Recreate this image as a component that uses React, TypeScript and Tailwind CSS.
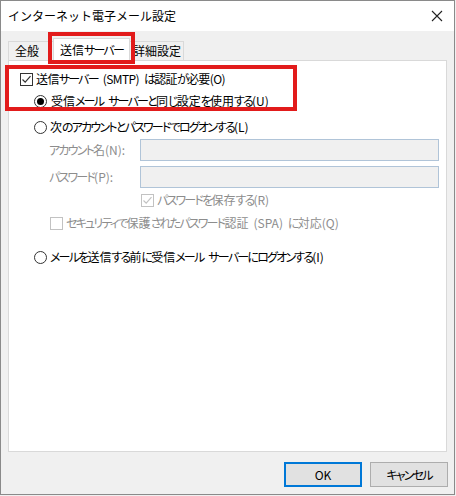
import React from 'react';

const font = { fontFamily: '"Noto Sans CJK JP", "Noto Sans", sans-serif' };

// Narrow the kana runs, the way the dialog's UI font draws them
function J({ t }: { t: string }) {
  const parts = t.split(/([\u3040-\u30ff]+| )/);
  return (
    <span className="whitespace-nowrap">
      {parts.map((p, i) =>
        p === ' ' ? (
          <span key={i} className="inline-block w-[5px]" />
        ) : /^[\u3040-\u30ff]+$/.test(p) ? (
          <span key={i} className="tracking-[-1.8px]">{p}</span>
        ) : (
          <span key={i}>{p}</span>
        )
      )}
    </span>
  );
}

function CheckBox({ checked, disabled }: { checked?: boolean; disabled?: boolean }) {
  const c = disabled ? '#c2c2c2' : '#333333';
  return (
    <svg width="13" height="13" viewBox="0 0 13 13" className="flex-shrink-0">
      <rect x="0.5" y="0.5" width="12" height="12" fill="#ffffff" stroke={c} />
      {checked && <path d="M2.5 6.5 L5.2 9.2 L10.5 3.2" fill="none" stroke={c} strokeWidth="1.2" />}
    </svg>
  );
}

function Radio({ checked }: { checked?: boolean }) {
  return (
    <svg width="13" height="13" viewBox="0 0 13 13" className="flex-shrink-0">
      <circle cx="6.5" cy="6.5" r="6" fill="#ffffff" stroke="#333333" />
      {checked && <circle cx="6.5" cy="6.5" r="3.5" fill="#000000" />}
    </svg>
  );
}

/**
 * Outlook account settings dialog - outgoing server tab
 */
export default function App() {
  return (
    <div className="w-[456px] h-[496px] bg-[#f0f0f0] text-[12px] text-black relative" style={font}>
      <div className="w-[455px] h-[495px] border border-[#8a8a8a] flex flex-col bg-[#f0f0f0]">
        {/* Title bar */}
        <div className="h-[30px] bg-white flex items-center justify-between pl-[7px] pr-[11px] flex-shrink-0">
          <span className="text-[12px] leading-none">インターネット電子メール設定</span>
          <svg width="12" height="12" viewBox="0 0 12 12">
            <path d="M1 1 L11 11 M11 1 L1 11" stroke="#222" strokeWidth="1.1" />
          </svg>
        </div>

        <div className="flex flex-col [font-feature-settings:'palt']">
          {/* Tabs */}
          <div className="flex items-end h-[29px] pl-[7px] relative z-10">
            <div className="h-[19px] w-[46px] pl-[6px] border border-b-0 border-[#d9d9d9] bg-[#f0f0f0] flex items-center leading-none mr-[-1px]">
              全般
            </div>
            <div className="h-[23px] w-[77px] mb-[-1px] justify-center border border-b-0 border-[#d9d9d9] bg-white flex items-center leading-none">
              <J t="送信サーバー" />
            </div>
            <div className="h-[19px] w-[54px] pl-[3px] border border-b-0 border-l-0 border-[#d9d9d9] bg-[#f0f0f0] flex items-center leading-none">
              詳細設定
            </div>
          </div>

          {/* Panel */}
          <div className="mx-[7px] h-[392px] bg-white border border-[#d9d9d9] flex flex-col pt-[7px] leading-none whitespace-nowrap">
            <div className="h-[22px] flex items-center pl-[11px] gap-[3px] tracking-[-0.6px]">
              <CheckBox checked />
              <J t="送信サーバー (SMTP) は認証が必要(O)" />
            </div>
            <div className="h-[22px] flex items-center pl-[25px] gap-[4px]">
              <Radio checked />
              <J t="受信メール サーバーと同じ設定を使用する(U)" />
            </div>
            <div className="h-[22px] mt-[4px] flex items-center pl-[25px] gap-[3px]">
              <Radio />
              <J t="次のアカウントとパスワードでログオンする(L)" />
            </div>
            <div className="h-[22px] mt-[1px] flex items-center pl-[40px] text-[#8d8d8d]">
              <span className="w-[91px]"><J t="アカウント名(N):" /></span>
              <div className="w-[299px] h-[22px] bg-[#f0f0f0] border border-[#b0c4d8]" />
            </div>
            <div className="h-[22px] mt-[5px] flex items-center pl-[40px] text-[#8d8d8d]">
              <span className="w-[91px]"><J t="パスワード(P):" /></span>
              <div className="w-[299px] h-[22px] bg-[#f0f0f0] border border-[#b0c4d8]" />
            </div>
            <div className="h-[20px] mt-[2px] flex items-center pl-[132px] gap-[3px] text-[#8d8d8d]">
              <CheckBox checked disabled />
              <J t="パスワードを保存する(R)" />
            </div>
            <div className="h-[20px] mt-[3px] flex items-center pl-[41px] gap-[3px] text-[#8d8d8d]">
              <CheckBox disabled />
              <J t="セキュリティで保護されたパスワード認証 (SPA) に対応(Q)" />
            </div>
            <div className="h-[22px] mt-[13px] flex items-center pl-[25px] gap-[3px]">
              <Radio />
              <J t="メールを送信する前に受信メール サーバーにログオンする(I)" />
            </div>
          </div>

          {/* Buttons */}
          <div className="flex justify-end gap-[8px] pr-[6px] mt-[10px]">
            <button className="w-[78px] h-[25px] bg-[#e1e1e1] border-2 border-[#0078d7] leading-none">OK</button>
            <button className="w-[78px] h-[25px] bg-[#e1e1e1] border border-[#adadad] leading-none">
              <J t="キャンセル" />
            </button>
          </div>
        </div>
      </div>

      {/* Red annotation boxes */}
      <div className="absolute left-[48px] top-[32px] w-[87px] h-[32px] border-4 border-[#e21b1b] z-20" />
      <div className="absolute left-[5px] top-[65px] w-[292px] h-[46px] border-4 border-[#e21b1b] z-20" />
    </div>
  );
}
